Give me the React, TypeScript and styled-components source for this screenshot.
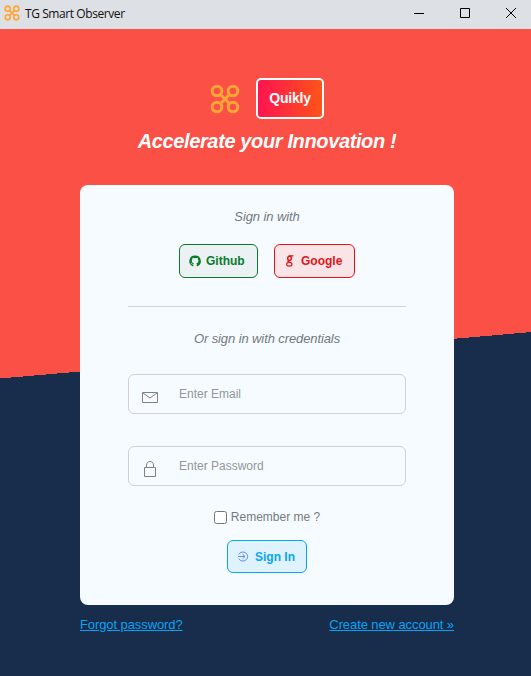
import React from 'react';
import styled, { createGlobalStyle } from 'styled-components';

const GlobalStyle = createGlobalStyle`
  * { box-sizing: border-box; }
  body { margin: 0; overflow: hidden; font-family: "Liberation Sans", Arial, sans-serif; }
`;

const Window = styled.div`
  display: flex;
  flex-direction: column;
  width: 531px;
  height: 676px;
`;

const TitleBar = styled.header`
  display: flex;
  align-items: center;
  height: 29px;
  flex: none;
  padding-left: 4px;
  background: #dde0e5;
  color: #111;
`;

const TitleIcon = styled.span`
  display: flex;
  margin-top: -3px;
`;

const WindowTitle = styled.span`
  flex: 1;
  margin: -2px 0 0 5px;
  font: 12px/16px "Open Sans", "Noto Sans", sans-serif;
  letter-spacing: -0.42px;
`;

const Control = styled.svg`
  width: 46px;
  height: 29px;
  flex: none;
  fill: none;
  stroke: #000;
`;

const Controls = styled.div`
  display: flex;
  margin-right: -3px;
`;

const Page = styled.main`
  flex: 1;
  padding: 49px 77px 0 80px;
  background: linear-gradient(175deg, #fb5045 50.4%, #182d4b 50.4%);
`;

const Brand = styled.div`
  display: flex;
  justify-content: center;
  align-items: center;
  gap: 16px;
  height: 41px;
`;

const BrandBadge = styled.div`
  display: flex;
  align-items: center;
  justify-content: center;
  width: 68px;
  height: 41px;
  padding-bottom: 1px;
  border: 2px solid #fff;
  border-radius: 5px;
  background: linear-gradient(90deg, #ff1450, #ff5419);
  color: #fff;
  font-size: 14px;
  font-weight: bold;
  letter-spacing: -0.2px;
`;

const Tagline = styled.h1`
  margin: 11px 0 0;
  color: #fff;
  font-size: 20px;
  line-height: 23px;
  font-style: italic;
  text-align: center;
  white-space: nowrap;
  letter-spacing: -0.37px;
`;

const Card = styled.form`
  display: flex;
  flex-direction: column;
  align-items: center;
  height: 420px;
  margin-top: 32px;
  padding: 23px 48px 0;
  border-radius: 8px;
  background: #f5fbff;
`;

const Caption = styled.p`
  margin: 0;
  font-size: 13px;
  line-height: 17px;
  font-style: italic;
  letter-spacing: -0.1px;
  color: #74797d;
`;

const Providers = styled.div`
  display: flex;
  gap: 16px;
  margin-top: 19px;
`;

const Button = styled.button<{ $color: string; $fill: string; $width: number; $height: number; $gap: number }>`
  display: flex;
  align-items: center;
  gap: ${(p) => p.$gap}px;
  width: ${(p) => p.$width}px;
  height: ${(p) => p.$height}px;
  padding: 0 0 0 9px;
  border: 1px solid ${(p) => p.$color};
  border-radius: 6px;
  background: ${(p) => p.$fill};
  color: ${(p) => p.$color};
  font: bold 12px "Liberation Sans", Arial, sans-serif;
  white-space: nowrap;
`;

const Divider = styled.hr`
  width: 278px;
  height: 1px;
  margin: 28px 0 23px;
  border: 0;
  background: #d0d5d8;
`;

const Field = styled.label<{ $top: number }>`
  display: flex;
  width: 278px;
  height: 40px;
  margin-top: ${(p) => p.$top}px;
  padding-left: 13px;
  border: 1px solid #d2d0d2;
  border-radius: 6px;
`;

const FieldIcon = styled.svg`
  width: 16px;
  height: 18px;
  margin-top: 13px;
  flex: none;
  fill: none;
  stroke: #83807f;
`;

const Input = styled.input`
  flex: 1;
  min-width: 0;
  height: 38px;
  margin-left: 21px;
  padding: 0 0 1px;
  border: 0;
  outline: 0;
  background: transparent;
  font: 12px "Liberation Sans", Arial, sans-serif;
  &::placeholder { color: #93979a; opacity: 1; }
`;

const Remember = styled.label`
  display: flex;
  align-items: center;
  gap: 4px;
  height: 16px;
  margin: 23px 0 15px;
  font-size: 12px;
  color: #777b80;
`;

const Checkbox = styled.input`
  appearance: none;
  width: 13px;
  height: 13px;
  margin: 1px 0 0;
  border: 1px solid #767676;
  border-radius: 2.5px;
  background: #fff;
`;

const Links = styled.nav`
  display: flex;
  justify-content: space-between;
  margin-top: 12px;
`;

const Link = styled.a`
  color: #08a3f5;
  font-size: 13px;
  line-height: 16px;
  letter-spacing: -0.09px;
  text-decoration: underline;
`;

function Drone({ size }: { size: number }) {
  return (
    <svg width={size} height={size} viewBox="0 0 30 30" fill="none" stroke="#ffa638" strokeWidth="3">
      <circle cx="7" cy="7" r="4.800" />
      <circle cx="23" cy="7" r="4.800" />
      <circle cx="7" cy="23" r="4.800" />
      <circle cx="23" cy="23" r="4.800" />
      <path d="M10 10 20 20M20 10 10 20" />
    </svg>
  );
}

export default function App() {
  return (
    <>
      <GlobalStyle />
      <Window>
        <TitleBar>
          <TitleIcon><Drone size={16} /></TitleIcon>
          <WindowTitle>TG Smart Observer</WindowTitle>
          <Controls>
            <Control viewBox="0 0 46 29"><path d="M18 13.500H28" /></Control>
            <Control viewBox="0 0 46 29"><path d="M18.500 8.500H27.500V17.500H18.500Z" /></Control>
            <Control viewBox="0 0 46 29"><path d="M18 8 28 18M28 8 18 18" /></Control>
          </Controls>
        </TitleBar>
        <Page>
          <Brand>
            <Drone size={30} />
            <BrandBadge>Quikly</BrandBadge>
          </Brand>
          <Tagline>Accelerate your Innovation !</Tagline>
          <Card>
            <Caption>Sign in with</Caption>
            <Providers>
              <Button type="button" $color="#087b2c" $fill="#ecf1f3" $width={79} $height={34} $gap={5}>
                <svg width="12" height="12" viewBox="0 0 16 16" fill="currentColor">
                  <path d="M8 .7a7.500 7.500 0 0 0-3 14.400c.6.3.9 0 .9-.4v-2c-2 .4-2.500-.5-2.700-1-.2-.5-.7-1-1.100-1.200.8-.3 1.500.3 1.900.9.6.9 1.300.9 2 .6.1-.5.3-.8.6-1C4.500 10.700 3.800 9.300 3.800 7.500c0-.8.3-1.500.8-2-.2-.7-.1-1.400.1-2 .8 0 1.500.4 2.100.8a7 7 0 0 1 2.800 0c.6-.4 1.300-.8 2.100-.8.3.6.3 1.300.1 2 .5.500.8 1.200.8 2 0 1.800-.8 3.200-2.900 3.500.4.300.6.9.6 1.700v2c0 .4.300.7.9.4A7.500 7.500 0 0 0 8 .7Z" />
                </svg>
                Github
              </Button>
              <Button type="button" $color="#e31519" $fill="#f9e5e7" $width={81} $height={34} $gap={5}>
                <svg width="12" height="12" viewBox="0 0 12 12" fill="none" stroke="currentColor">
                  <ellipse cx="5.500" cy="3.300" rx="1.800" ry="2.300" strokeWidth="1.500" />
                  <path d="M5.500 .8H9.500M4.500 5.400C3.300 6.500 4.200 6.900 5.800 7.400" strokeWidth="1.300" />
                  <ellipse cx="5.300" cy="9.200" rx="2.700" ry="1.900" strokeWidth="1.200" />
                </svg>
                Google
              </Button>
            </Providers>
            <Divider />
            <Caption>Or sign in with credentials</Caption>
            <Field $top={27}>
              <FieldIcon viewBox="0 0 16 18"><path d="M.5 4.500H15.500V14.500H.5ZM1 5 8 10 15 5" /></FieldIcon>
              <Input type="email" placeholder="Enter Email" />
            </Field>
            <Field $top={32}>
              <FieldIcon viewBox="0 0 16 18"><path d="M2.500 7.500H13.500V16.500H2.500ZM4.500 7V5C4.500 .3 11.500 .3 11.500 5V7" /></FieldIcon>
              <Input type="password" placeholder="Enter Password" />
            </Field>
            <Remember><Checkbox type="checkbox" />Remember me ?</Remember>
            <Button type="submit" $color="#0aa5f5" $fill="#dff3fe" $width={80} $height={33} $gap={6}>
              <svg width="12" height="12" viewBox="0 0 12 12" fill="none" stroke="#5b91f0">
                <path d="M1.700 3.300A4.800 4.500 0 1 1 1.700 7.700M1 5.500H8M5.500 3.200 8 5.500 5.500 7.800" />
              </svg>
              Sign In
            </Button>
          </Card>
          <Links>
            <Link href="#">Forgot password?</Link>
            <Link href="#">Create new account »</Link>
          </Links>
        </Page>
      </Window>
    </>
  );
}
